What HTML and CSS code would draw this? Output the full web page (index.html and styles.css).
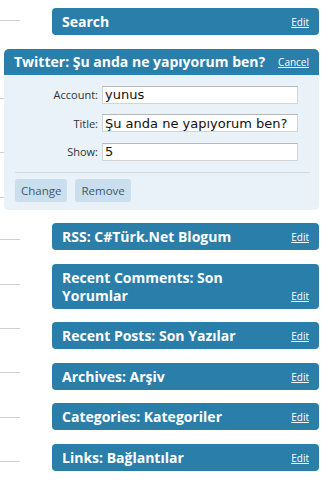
FILE: index.html
```html
<!DOCTYPE html>
<html lang="tr">
<head>
    <meta charset="UTF-8">
    <meta name="viewport" content="width=device-width, initial-scale=1.0">
    <title>Widgets</title>
    <link rel="stylesheet" href="styles.css">
</head>
<body>
    <div class="page">
        <div class="rails">
            <div class="rail r1"></div>
            <div class="rail r2"></div>
            <div class="rail r3"></div>
            <div class="rail r4"></div>
            <div class="rail r5"></div>
            <div class="rail r6"></div>
            <div class="rail r7"></div>
            <div class="rail r8"></div>
            <div class="rail r9"></div>
            <div class="rail r10"></div>
        </div>

        <div class="widgets">
            <div class="bar">
                <span class="title">Search</span>
                <a class="edit" href="#">Edit</a>
            </div>

            <div class="panel">
                <div class="bar bar-open">
                    <span class="title">Twitter: Şu anda ne yapıyorum ben?</span>
                    <a class="edit" href="#">Cancel</a>
                </div>
                <form class="fields">
                    <label for="account">Account:</label>
                    <input id="account" type="text" value="yunus">
                    <label for="title">Title:</label>
                    <input id="title" type="text" value="Şu anda ne yapıyorum ben?">
                    <label for="show">Show:</label>
                    <input id="show" type="text" value="5">
                </form>
                <div class="divider"></div>
                <div class="actions">
                    <button type="button">Change</button>
                    <button type="button">Remove</button>
                </div>
            </div>

            <div class="bar">
                <span class="title">RSS: C#Türk.Net Blogum</span>
                <a class="edit" href="#">Edit</a>
            </div>
            <div class="bar">
                <span class="title">Recent Comments: Son Yorumlar</span>
                <a class="edit" href="#">Edit</a>
            </div>
            <div class="bar">
                <span class="title">Recent Posts: Son Yazılar</span>
                <a class="edit" href="#">Edit</a>
            </div>
            <div class="bar">
                <span class="title">Archives: Arşiv</span>
                <a class="edit" href="#">Edit</a>
            </div>
            <div class="bar">
                <span class="title">Categories: Kategoriler</span>
                <a class="edit" href="#">Edit</a>
            </div>
            <div class="bar">
                <span class="title">Links: Bağlantılar</span>
                <a class="edit" href="#">Edit</a>
            </div>
        </div>
    </div>
</body>
</html>
```

FILE: styles.css
```css
body {
    margin: 0;
    background: #fff;
    font-family: 'Open Sans', 'DejaVu Sans', sans-serif;
}
.page {
    display: grid;
    width: 333px;
}
.rails, .widgets {
    grid-area: 1 / 1;
}
.rails {
    display: flex;
    flex-direction: column;
}
.rail {
    width: 20px;
    height: 1px;
    background: #cfcfcf;
}
.r1 { margin-top: 20px; }
.r2 { margin-top: 77px; }
.r3 { margin-top: 53px; }
.r4 { margin-top: 44px; }
.r5 { margin-top: 41px; }
.r6 { margin-top: 44px; }
.r7 { margin-top: 43px; }
.r8 { margin-top: 43px; }
.r9 { margin-top: 44px; }
.r10 { margin-top: 43px; }

.widgets {
    display: flex;
    flex-direction: column;
    gap: 13.5px;
    padding: 8px 14px 0 4px;
    position: relative;
}
.bar {
    display: flex;
    align-items: flex-end;
    justify-content: space-between;
    gap: 12px;
    margin-left: 48px;
    padding: 5px 10px 4px;
    background: #2a7eaa;
    border-radius: 4px;
    color: #fff;
}
.title {
    font-weight: bold;
    font-size: 14px;
    line-height: 18px;
}
.edit {
    flex-shrink: 0;
    color: #fff;
    font-size: 10px;
    line-height: 18px;
    text-decoration: underline;
}

.panel {
    border-radius: 5px;
    background: #e9f1f9;
    padding-bottom: 8px;
}
.bar-open {
    margin-left: 0;
    padding: 4px 10px;
    border-radius: 5px 5px 0 0;
}
.fields {
    display: grid;
    grid-template-columns: 94px 196px;
    column-gap: 4px;
    row-gap: 10.5px;
    align-items: center;
    margin: 0;
    padding: 11px 0;
}
.fields label {
    text-align: right;
    font-size: 11px;
    color: #333;
}
.fields input {
    height: 18px;
    box-sizing: border-box;
    margin: 0;
    padding: 0 2px;
    border: 1px solid #d4d4d4;
    border-top-color: #b8b8b8;
    background: #fff;
    font-family: 'DejaVu Sans', sans-serif;
    font-size: 13px;
    color: #111;
}
.divider {
    height: 1px;
    margin: 0 9px 0 11px;
    background: #d3d9df;
}
.actions {
    display: flex;
    gap: 8px;
    padding: 6px 0 0 11px;
}
.actions button {
    height: 23px;
    padding: 0 6px;
    border: none;
    border-radius: 3px;
    background: #cbdeed;
    font-family: 'Open Sans', sans-serif;
    font-size: 11.5px;
    color: #3a5a72;
}
```
